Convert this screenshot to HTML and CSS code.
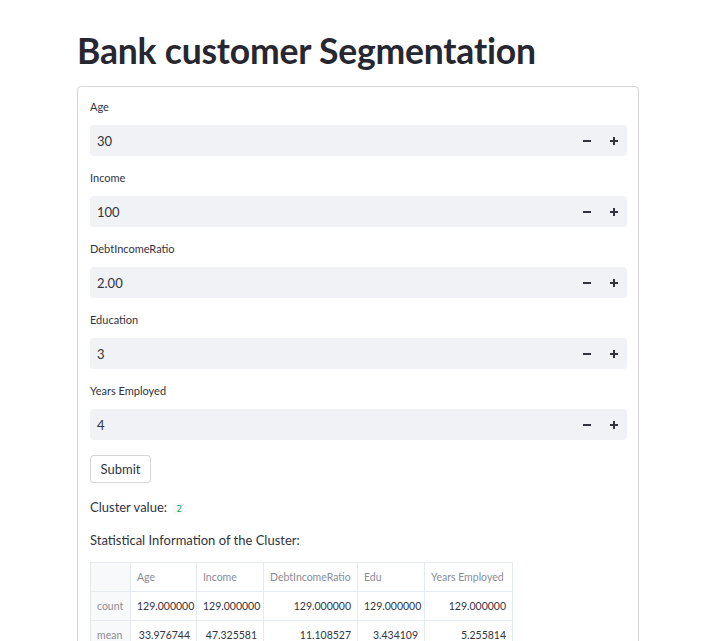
FILE: index.html
```html
<!DOCTYPE html>
<html>
<head>
<meta charset="utf-8">
<link rel="stylesheet" href="styles.css">
</head>
<body>
<div class="main">
  <h1 class="title">Bank customer Segmentation</h1>
  <div class="form">
    <div class="field">
      <div class="label">Age</div>
      <div class="input"><span class="val">30</span><span class="steps"><svg class="minus" width="8" height="8" viewBox="0 0 8 8"><rect x="0" y="3" width="8" height="2" fill="#31333f"/></svg><svg class="plus" width="8" height="8" viewBox="0 0 8 8"><rect x="0" y="3" width="8" height="2" fill="#31333f"/><rect x="3" y="0" width="2" height="8" fill="#31333f"/></svg></span></div>
    </div>
    <div class="field">
      <div class="label">Income</div>
      <div class="input"><span class="val">100</span><span class="steps"><svg class="minus" width="8" height="8" viewBox="0 0 8 8"><rect x="0" y="3" width="8" height="2" fill="#31333f"/></svg><svg class="plus" width="8" height="8" viewBox="0 0 8 8"><rect x="0" y="3" width="8" height="2" fill="#31333f"/><rect x="3" y="0" width="2" height="8" fill="#31333f"/></svg></span></div>
    </div>
    <div class="field">
      <div class="label">DebtIncomeRatio</div>
      <div class="input"><span class="val">2.00</span><span class="steps"><svg class="minus" width="8" height="8" viewBox="0 0 8 8"><rect x="0" y="3" width="8" height="2" fill="#31333f"/></svg><svg class="plus" width="8" height="8" viewBox="0 0 8 8"><rect x="0" y="3" width="8" height="2" fill="#31333f"/><rect x="3" y="0" width="2" height="8" fill="#31333f"/></svg></span></div>
    </div>
    <div class="field">
      <div class="label">Education</div>
      <div class="input"><span class="val">3</span><span class="steps"><svg class="minus" width="8" height="8" viewBox="0 0 8 8"><rect x="0" y="3" width="8" height="2" fill="#31333f"/></svg><svg class="plus" width="8" height="8" viewBox="0 0 8 8"><rect x="0" y="3" width="8" height="2" fill="#31333f"/><rect x="3" y="0" width="2" height="8" fill="#31333f"/></svg></span></div>
    </div>
    <div class="field">
      <div class="label">Years Employed</div>
      <div class="input"><span class="val">4</span><span class="steps"><svg class="minus" width="8" height="8" viewBox="0 0 8 8"><rect x="0" y="3" width="8" height="2" fill="#31333f"/></svg><svg class="plus" width="8" height="8" viewBox="0 0 8 8"><rect x="0" y="3" width="8" height="2" fill="#31333f"/><rect x="3" y="0" width="2" height="8" fill="#31333f"/></svg></span></div>
    </div>
    <button class="submit">Submit</button>
    <p class="text">Cluster value: <code class="code">2</code></p>
    <p class="text">Statistical Information of the Cluster:</p>
    <table class="stats">
      <colgroup>
        <col class="w-idx"><col class="w-age"><col class="w-inc"><col class="w-debt"><col class="w-edu"><col class="w-yrs">
      </colgroup>
      <thead>
        <tr><th class="idx"></th><th>Age</th><th>Income</th><th>DebtIncomeRatio</th><th>Edu</th><th>Years Employed</th></tr>
      </thead>
      <tbody>
        <tr><th class="idx">count</th><td>129.000000</td><td>129.000000</td><td>129.000000</td><td>129.000000</td><td>129.000000</td></tr>
        <tr><th class="idx">mean</th><td>33.976744</td><td>47.325581</td><td>11.108527</td><td>3.434109</td><td>5.255814</td></tr>
        <tr><th class="idx">std</th><td>8.012066</td><td>31.014405</td><td>6.964219</td><td>1.158793</td><td>4.883051</td></tr>
      </tbody>
    </table>
  </div>
</div>
</body>
</html>
```
FILE: styles.css
```css
html, body {
  margin: 0;
  padding: 0;
  background: #ffffff;
}
body {
  font-family: "Lato", "Open Sans", sans-serif;
  color: #31333f;
}
.main {
  width: 562px;
  margin-left: 77px;
}
.title {
  margin: 0;
  padding-top: 29px;
  height: 86px;
  box-sizing: border-box;
  font-size: 35.5px;
  line-height: 44px;
  font-weight: 700;
  color: #262730;
  letter-spacing: -0.2px;
}
.form {
  border: 1px solid rgba(49, 51, 63, 0.2);
  border-radius: 4px;
  padding: 11px 11px 20px 12px;
  height: 600px;
}
.field {
  margin-bottom: 13px;
}
.field:last-of-type {
  margin-bottom: 15px;
}
.label {
  font-size: 11px;
  line-height: 18px;
  height: 18px;
  margin-bottom: 9px;
  color: #31333f;
}
.input {
  height: 31px;
  background: #f0f2f6;
  border-radius: 4px;
  display: flex;
  align-items: center;
  justify-content: space-between;
  padding: 0 9px 0 7px;
  font-size: 13px;
}
.steps {
  display: flex;
  align-items: center;
  gap: 19px;
}
.steps svg {
  display: block;
}
.submit {
  display: block;
  height: 28px;
  width: 61px;
  padding: 0;
  background: #ffffff;
  border: 1px solid rgba(49, 51, 63, 0.2);
  border-radius: 4px;
  font-family: inherit;
  font-size: 13px;
  color: #31333f;
}
.text {
  margin: 0;
  font-size: 13px;
  line-height: 18px;
}
.submit + .text {
  margin-top: 15px;
}
.text + .text {
  margin-top: 13px;
}
.code {
  font-family: "DejaVu Sans Mono", monospace;
  font-size: 9px;
  color: #09ab3b;
  background: #f8f9fb;
  padding: 1px 3px;
  border-radius: 3px;
  margin-left: 3px;
}
.stats {
  margin-top: 13px;
  border-collapse: collapse;
  table-layout: fixed;
  width: 423px;
  font-size: 10.5px;
  border: 1px solid #e6eaf1;
}
.w-idx { width: 40px; }
.w-age { width: 66px; }
.w-inc { width: 67px; }
.w-debt { width: 94px; }
.w-edu { width: 67px; }
.w-yrs { width: 88px; }
.stats th, .stats td {
  border: 1px solid #e6eaf1;
  height: 28px;
  padding: 0 6px;
  font-weight: 400;
  white-space: nowrap;
  overflow: hidden;
}
.stats td {
  text-align: right;
  color: #31333f;
}
.stats thead th {
  text-align: left;
  color: #8a8d97;
  background: #ffffff;
}
.stats th.idx {
  background: #f8f9fb;
  color: #8a8d97;
  text-align: left;
}
```
